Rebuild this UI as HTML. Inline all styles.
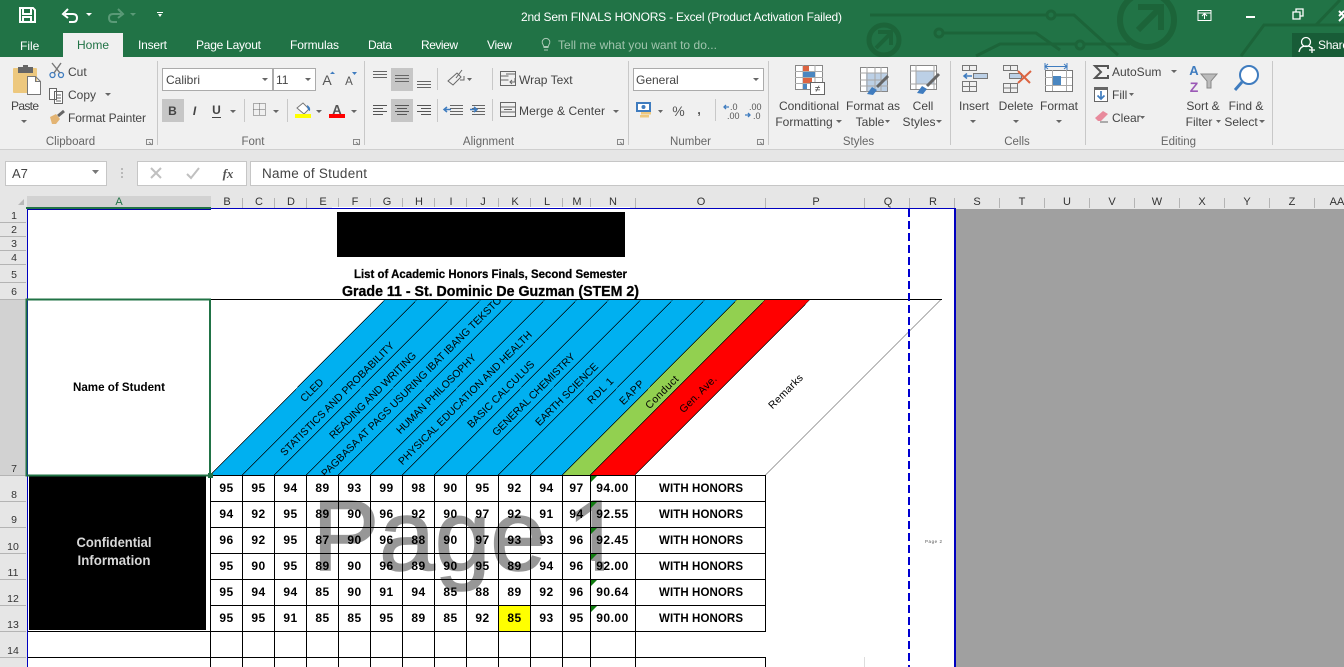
<!DOCTYPE html>
<html><head><meta charset="utf-8"><style>
html,body{margin:0;padding:0;width:1344px;height:667px;overflow:hidden;background:#fff}
svg{display:block}
text{font-family:"Liberation Sans",sans-serif}
.r{font-size:12px;fill:#444}
.g{font-size:11.5px;fill:#666;text-anchor:middle}
.t{font-size:12px;fill:#fff}
.h{font-size:11px;fill:#333;text-anchor:middle}
.rh{font-size:10.5px;fill:#333;text-anchor:middle}
.n{font-size:12px;font-weight:bold;fill:#000;text-anchor:middle;letter-spacing:.5px}
.d{font-size:10.5px;fill:#000}
.c{text-anchor:middle}
</style></head><body>
<svg width="1344" height="667" viewBox="0 0 1344 667" xmlns="http://www.w3.org/2000/svg">
<defs><clipPath id="tb"><rect x="0" y="0" width="1344" height="57"/></clipPath><clipPath id="hd"><rect x="211" y="300" width="760" height="175"/></clipPath>
<clipPath id="one"><path d="M570 490H620V561H604V575H595V561H570z"/></clipPath></defs>
<!-- title bar -->
<rect width="1344" height="57" fill="#217346"/>
<g clip-path="url(#tb)" fill="none" stroke="#1c6439" stroke-width="3">
<circle cx="1147" cy="20" r="27" stroke-width="6"/><path d="M1138 30L1160 8M1138 7h23v23" stroke-width="6"/>
<circle cx="884" cy="40" r="15" stroke-width="5"/><path d="M876 48L890 34M878 32h13v13" stroke-width="4"/>
<path d="M870 15H1047M1055 15H1074L1118 55M944 33H1036L1060 50M976 56L1000 44H1075M1085 44H1130"/>
<circle cx="1051" cy="15" r="4"/><circle cx="939" cy="33" r="4"/><circle cx="1080" cy="45" r="4"/>
<path d="M1241 56L1264 25H1344M1316 25L1340 0"/>
</g>
<!-- QAT -->
<path d="M20 8h13l2 2v12H20z M23 8v6h8V8 M23 22v-5h8v5" fill="none" stroke="#fff" stroke-width="2"/>
<path d="M65 14h8q4 0 4 4t-4 4h-4M68 9l-5 5 5 4" fill="none" stroke="#fff" stroke-width="2"/>
<path d="M86 13h6l-3 3zM157 12h6v1h-6zM158 14h4l-2 3z" fill="#fff"/>
<path d="M121 14h-8q-4 0-4 4t4 4h4M118 9l5 5-5 4" fill="none" stroke="#5a9a77" stroke-width="2"/>
<path d="M130 13h6l-3 3z" fill="#5a9a77"/>
<text x="521" y="21" class="t" textLength="321">2nd Sem FINALS HONORS - Excel (Product Activation Failed)</text>
<!-- window controls -->
<path d="M1198 10.500h13v10h-13zM1198 13h13M1204.500 19v-5M1202 16l2.500-2.500 2.500 2.500" fill="none" stroke="#fff"/>
<rect x="1246" y="16" width="9" height="2" fill="#fff"/>
<path d="M1293 12h7v7h-7zM1296 12v-3h7v7h-3" fill="none" stroke="#fff" stroke-width="1.300"/>
<path d="M1339 11l5 5M1344 11l-5 5M1339 21l5-5" stroke="#fff" stroke-width="2"/>
<!-- tabs -->
<rect x="1292" y="33" width="52" height="24" fill="#185c37"/>
<circle cx="1306" cy="42" r="4.500" fill="none" stroke="#fff" stroke-width="1.300"/><path d="M1299 52q1-6 7-6t6 3M1309 50h6M1312 47v6" fill="none" stroke="#fff" stroke-width="1.300"/>
<text x="1318" y="49" class="t" textLength="31">Share</text>
<rect x="63" y="33" width="60" height="24" fill="#f0f0f0"/>
<text x="20" y="50" class="t">File</text>
<text x="93" y="49" font-size="12" fill="#217346" text-anchor="middle">Home</text>
<text x="138" y="49" class="t" textLength="29">Insert</text><text x="196" y="49" class="t" textLength="65">Page Layout</text><text x="290" y="49" class="t" textLength="49">Formulas</text><text x="368" y="49" class="t" textLength="24">Data</text><text x="421" y="49" class="t" textLength="37">Review</text><text x="487" y="49" class="t" textLength="25">View</text>
<path d="M544 50h4M543.500 47.500h5M543 44.500a3.800 3.800 0 1 1 6 0l-.8 2h-4.400z" fill="none" stroke="#a9c9b5"/>
<text x="558" y="49" font-size="12" fill="#a0c4ad" textLength="159">Tell me what you want to do...</text>
<!-- ribbon -->
<rect y="57" width="1344" height="93" fill="#f0f0f0"/>
<rect y="149" width="1344" height="1" fill="#cfcfcf"/>
<path d="M157.500 61v84M364.500 61v84M628.500 61v84M768.500 61v84M950.500 61v84M1085.500 61v84M1272.500 61v84" stroke="#c8c8c8"/>
<text x="70.500" y="145" class="g">Clipboard</text><text x="253" y="145" class="g">Font</text><text x="488.500" y="145" class="g">Alignment</text><text x="690.500" y="145" class="g">Number</text><text x="858.500" y="145" class="g">Styles</text><text x="1017" y="145" class="g">Cells</text><text x="1178.500" y="145" class="g">Editing</text>
<path d="M146.500 139.500h6v5h-6zM149 142l3 3M353.500 139.500h6v5h-6zM356 142l3 3M617.500 139.500h6v5h-6zM620 142l3 3M757.500 139.500h6v5h-6zM760 142l3 3" fill="none" stroke="#888"/>
<!-- clipboard -->
<rect x="13" y="68" width="24" height="25" rx="1" fill="#edc87e"/><rect x="18" y="67" width="15" height="6" fill="#666"/><rect x="23" y="65" width="5" height="4" fill="#666"/>
<path d="M27.500 76.500h8l5 5v13h-13z M35.500 76.500v5h5" fill="#fff" stroke="#777"/>
<text x="11" y="110" class="r" textLength="28">Paste</text><path d="M21 120h6l-3 3z" fill="#666"/>
<circle cx="52.500" cy="75" r="2.500" fill="none" stroke="#3f7cbf" stroke-width="1.300"/><circle cx="61" cy="75" r="2.500" fill="none" stroke="#3f7cbf" stroke-width="1.300"/><path d="M54 73l7-10M60 73l-8-10" stroke="#777" stroke-width="1.400"/>
<text x="68" y="76" class="r">Cut</text>
<path d="M49.500 88.500h7v11h-7zM54.500 91.500h8v12h-8zM56 95h5M56 98h5M56 101h5" fill="#fff" stroke="#666"/>
<text x="68" y="99" class="r" textLength="28">Copy</text><path d="M105 93h6l-3 3z" fill="#666"/>
<path d="M50 117l6-3 4 5-4 5h-4z" fill="#e3b473"/><path d="M58 116l6-5" stroke="#666" stroke-width="3"/>
<text x="68" y="122" class="r" textLength="78">Format Painter</text>
<!-- font -->
<path d="M162.500 68.500h110v22h-110zM273.500 68.500h42v22h-42z" fill="#fff" stroke="#ababab"/>
<text x="166" y="84" class="r">Calibri</text><text x="276" y="84" class="r">11</text>
<path d="M262 78h6l-3 3zM305 78h6l-3 3z" fill="#666"/>
<text x="327" y="85" font-size="14" fill="#555" text-anchor="middle">A</text><path d="M330 74h5l-2.500-2.500z" fill="#3f7cbf"/>
<text x="349" y="85" font-size="11.500" fill="#555" text-anchor="middle">A</text><path d="M352 72h5l-2.500 3z" fill="#3f7cbf"/>
<rect x="162" y="99" width="22" height="23" fill="#c6c6c6"/>
<text x="172.500" y="115" font-size="12" font-weight="bold" fill="#444" text-anchor="middle">B</text>
<text x="194.500" y="115" font-size="12" font-style="italic" font-weight="bold" fill="#444" text-anchor="middle">I</text>
<text x="216.500" y="114" font-size="12" font-weight="bold" fill="#444" text-anchor="middle">U</text><path d="M212 117.500h9" stroke="#444"/>
<path d="M230 110h6l-3 3zM273 110h6l-3 3zM316 110h6l-3 3zM351 110h6l-3 3z" fill="#666"/>
<path d="M244.500 99v23M287.500 99v23" stroke="#c8c8c8"/>
<path d="M253.500 103.500h12v12h-12zM253.500 109.500h12M259.500 103.500v12" fill="none" stroke="#666" stroke-dasharray="1 1"/>
<path d="M297 108l6-5 6 6-5 5z" fill="#fff" stroke="#777"/><path d="M307 105q4 2 3 6-3-1-3-6z" fill="#3f7cbf"/>
<rect x="295" y="114" width="16" height="4" fill="#ffff00"/>
<text x="337" y="114" font-size="13" font-weight="bold" fill="#555" text-anchor="middle">A</text>
<rect x="329" y="114" width="16" height="4" fill="#f00"/>
<!-- alignment -->
<rect x="391" y="68" width="22" height="23" fill="#c6c6c6"/><rect x="391" y="99" width="22" height="23" fill="#c6c6c6"/>
<path d="M373 71.500h14M373 74.500h14M373 77.500h14M395 75.500h14M395 78.500h14M395 81.500h14M417 81.500h14M417 84.500h14M417 87.500h14" stroke="#666"/>
<path d="M373 105.500h14M373 108.500h10M373 111.500h14M373 114.500h10M395 105.500h14M397 108.500h10M395 111.500h14M397 114.500h10M417 105.500h14M421 108.500h10M417 111.500h14M421 114.500h10" stroke="#555"/>
<path d="M437.500 68v22M437.500 99v23M492.500 68v22M492.500 99v22" stroke="#c8c8c8"/>
<path d="M448 81l9-8 4 4-8 8zM462 70l-6 8" fill="none" stroke="#666"/><path d="M460 80h4v-4" fill="none" stroke="#666"/><path d="M467 78h5l-2.500 3z" fill="#666"/>
<path d="M450 105.500h13M450 108.500h13M450 111.500h13M450 114.500h13M472 105.500h13M472 108.500h13M472 111.500h13M472 114.500h13" stroke="#666"/>
<path d="M445 109.500h6M447 107l-3 2.500 3 2.500M470 109.500h6M474 107l3 2.500-3 2.500" fill="none" stroke="#3f7cbf" stroke-width="1.500"/>
<path d="M500.500 71.500h15v14h-15zM500.500 76h8M500.500 80h8M506 74h9M515 78v4h-5M512 80l-2 2 2 2" fill="none" stroke="#666"/>
<text x="519" y="84" class="r">Wrap Text</text>
<path d="M500.500 102.500h15v14h-15zM500.500 107h15M500.500 112h15M504 109.500h8" fill="none" stroke="#666"/>
<text x="519" y="115" class="r" textLength="86">Merge &amp; Center</text>
<path d="M613 110h6l-3 3z" fill="#666"/>
<!-- number -->
<rect x="633.500" y="68.500" width="130" height="22" fill="#fff" stroke="#ababab"/><text x="636" y="84" class="r">General</text>
<path d="M753 78h6l-3 3zM658 110h5l-2.500 3z" fill="#666"/>
<rect x="637" y="103" width="13" height="8" fill="#fff" stroke="#3f7cbf" stroke-width="2"/><circle cx="643.500" cy="107" r="2" fill="#3f7cbf"/><rect x="641" y="112" width="10" height="2.500" fill="#edc87e"/><rect x="640" y="115" width="9" height="2.500" fill="#edc87e"/>
<text x="678.500" y="116" font-size="14" fill="#555" text-anchor="middle">%</text><text x="699" y="114" font-size="13" font-weight="bold" fill="#555" text-anchor="middle">,</text>
<path d="M715.500 99v22" stroke="#c8c8c8"/>
<text x="730" y="110" font-size="9" fill="#555">.0</text><text x="727" y="119" font-size="9" fill="#555">.00</text>
<text x="749" y="110" font-size="9" fill="#555">.00</text><text x="753" y="119" font-size="9" fill="#555">.0</text>
<path d="M724 107h5M726 105l-2 2 2 2M745 115h5M748 113l2 2-2 2" fill="none" stroke="#3f7cbf" stroke-width="1.300"/>
<!-- styles -->
<rect x="795.500" y="65.500" width="27" height="24" fill="#fff" stroke="#888"/><path d="M795 71.500h28M795 77.500h28M795 83.500h28M803 65v24M815 65v24" stroke="#aaa"/>
<rect x="803" y="66" width="6" height="5" fill="#dc6441"/><rect x="803" y="72" width="12" height="5" fill="#4a86c0"/><rect x="803" y="78" width="9" height="5" fill="#dc6441"/><rect x="803" y="84" width="4" height="5" fill="#4a86c0"/>
<rect x="810.500" y="82.500" width="14" height="12" fill="#fff" stroke="#666"/><text x="817.500" y="92" font-size="10" fill="#444" text-anchor="middle">≠</text>
<text x="809" y="110" class="r c">Conditional</text><text x="804" y="126" class="r c">Formatting</text>
<rect x="860.500" y="67.500" width="27" height="24" fill="#fff" stroke="#888"/><rect x="866" y="73" width="21" height="18" fill="#bcd0e6"/><path d="M860 73h28M860 80h28M860 86h28M867 67v25M875 67v25M881 67v25" stroke="#a6a6a6"/>
<path d="M867 94l5-7 5 3-4 5z" fill="#3f7cbf"/><path d="M877 87l11-11" stroke="#666" stroke-width="3"/>
<text x="873" y="110" class="r c">Format as</text><text x="870" y="126" class="r c">Table</text>
<rect x="910.500" y="65.500" width="26" height="24" fill="#fff" stroke="#888"/><rect x="916" y="71" width="18" height="13" fill="#bcd0e6"/><path d="M910 71h26M910 84h26M916 65v24M934 65v24" stroke="#a6a6a6"/>
<path d="M917 93l5-7 5 3-4 5z" fill="#3f7cbf"/><path d="M927 86l12-12" stroke="#666" stroke-width="3"/>
<text x="923" y="110" class="r c">Cell</text><text x="919" y="126" class="r c" textLength="33">Styles</text>
<path d="M836 120h6l-3 3zM885 120h5l-2.500 3zM936 120h6l-3 3zM970 120h6l-3 3zM1013 120h6l-3 3zM1056 120h6l-3 3zM1171 70h6l-3 3zM1129 93h5l-2.500 3zM1140 116h5l-2.500 3zM1216 120h5l-2.500 3zM1259 120h6l-3 3z" fill="#666"/>
<!-- cells -->
<path d="M962.500 65.500h14v5h-14zM969.500 65.500v5M962.500 81.500h14v10h-14zM962.500 86.500h14M969.500 81.500v10" fill="none" stroke="#777"/>
<rect x="973.500" y="73.500" width="14" height="5" fill="#bcd0e6" stroke="#777"/><path d="M964 76h8M967 73.500l-3 2.500 3 2.500" fill="none" stroke="#3f7cbf" stroke-width="1.500"/>
<text x="974" y="110" class="r c">Insert</text>
<path d="M1003.500 65.500h14v5h-14zM1010.500 65.500v5M1003.500 83.500h14v9h-14zM1003.500 88h14M1010.500 83.500v9" fill="none" stroke="#777"/><rect x="1009.500" y="73.500" width="12" height="5" fill="#bcd0e6" stroke="#777"/>
<path d="M1018 71l12 12M1031 71l-13 12" stroke="#dc6441" stroke-width="2"/>
<text x="1016" y="110" class="r c">Delete</text>
<path d="M1045 66.500h22M1048 64l-3 2.500 3 2.500M1064 64l3 2.500-3 2.500" fill="none" stroke="#3f7cbf"/><path d="M1045 63v7M1067 63v7" stroke="#3f7cbf"/>
<rect x="1045.500" y="70.500" width="27" height="21" fill="#fff" stroke="#777"/><path d="M1052.500 70v21M1066.500 70v21M1045 77.500h27M1045 85.500h27" stroke="#aaa"/><rect x="1053" y="76" width="8" height="9" fill="#4a86c0"/>
<text x="1059" y="110" class="r c">Format</text>
<!-- editing -->
<path d="M1108 69v-3h-13l6 6-6 6h13v-3" fill="none" stroke="#555" stroke-width="2"/>
<text x="1112" y="76" class="r">AutoSum</text>
<rect x="1094.500" y="88.500" width="13" height="13" fill="#fff" stroke="#666"/><rect x="1094" y="87" width="14" height="3" fill="#666"/><path d="M1101 91v8M1097.500 95.500l3.500 3.500 3.500-3.500" fill="none" stroke="#3f7cbf" stroke-width="1.700"/>
<text x="1112" y="99" class="r">Fill</text>
<path d="M1095 118l8-7 5 3-7 7h-3z" fill="#e88a9c"/><path d="M1100 122h8" stroke="#666"/>
<text x="1112" y="122" class="r">Clear</text>
<text x="1194" y="75" font-size="13" font-weight="bold" fill="#3f7cbf" text-anchor="middle">A</text><text x="1194" y="92" font-size="14" font-weight="bold" fill="#9b59b6" text-anchor="middle">Z</text>
<path d="M1201 74h16l-6 7v7h-4v-7z" fill="#bbb" stroke="#888"/>
<text x="1203" y="110" class="r c">Sort &amp;</text><text x="1199" y="126" class="r c">Filter</text>
<circle cx="1249" cy="75" r="9" fill="#fff" stroke="#3f7cbf" stroke-width="2"/><path d="M1242 82l-7 8" stroke="#3f7cbf" stroke-width="3"/>
<text x="1246" y="110" class="r c">Find &amp;</text><text x="1241" y="126" class="r c">Select</text>
<!-- formula bar -->
<rect y="150" width="1344" height="46" fill="#e6e6e6"/>
<path d="M5.500 161.500h101v24h-101zM137.500 161.500h109v24h-109zM250.500 161.500h1100v24h-1100z" fill="#fff" stroke="#c6c6c6"/>
<text x="12" y="178" font-size="13" fill="#444">A7</text><path d="M92 170h7l-3.500 4z" fill="#777"/>
<path d="M122 168v2M122 172v2M122 176v2" stroke="#aaa" stroke-width="1.500"/>
<path d="M151 168l10 10M161 168l-10 10M187 174l4 4 8-10" fill="none" stroke="#c0c0c0" stroke-width="2"/>
<text x="228" y="178" font-size="13" font-style="italic" font-weight="bold" fill="#555" text-anchor="middle" style="font-family:'Liberation Serif',serif">fx</text>
<text x="262" y="178" font-size="13.500" fill="#444" textLength="105">Name of Student</text>
<!-- headers -->
<rect y="196" width="1344" height="13" fill="#e6e6e6"/><rect y="196" width="27" height="471" fill="#e6e6e6"/>
<rect x="27" y="196" width="184" height="12" fill="#d2d2d2"/><rect x="26" y="207" width="185" height="2" fill="#217346"/>
<rect y="299" width="27" height="176" fill="#d2d2d2"/>
<path d="M24 199v6h-6z" fill="#b8b8b8"/>
<path d="M242.500 198v10M274.500 198v10M306.500 198v10M338.500 198v10M370.500 198v10M402.500 198v10M434.500 198v10M466.500 198v10M498.500 198v10M530.500 198v10M562.500 198v10M590.500 198v10M635.500 198v10M765.500 198v10M864.500 198v10M909.500 198v10M954.500 198v10M999.500 198v10M1044.500 198v10M1089.500 198v10M1134.500 198v10M1179.500 198v10M1224.500 198v10M1269.500 198v10M1314.500 198v10" stroke="#b4b4b4"/>
<path d="M0 222.500h26M0 236.500h26M0 250.500h26M0 264.500h26M0 282.500h26M0 299.500h26M0 475.500h26M0 501.500h26M0 527.500h26M0 553.500h26M0 579.500h26M0 605.500h26M0 631.500h26M0 657.500h26" stroke="#b4b4b4"/>
<text x="119" y="205" class="h" style="fill:#217346">A</text>
<text x="227" y="205" class="h">B</text><text x="259" y="205" class="h">C</text><text x="291" y="205" class="h">D</text><text x="323" y="205" class="h">E</text><text x="355" y="205" class="h">F</text><text x="387" y="205" class="h">G</text><text x="419" y="205" class="h">H</text><text x="451" y="205" class="h">I</text><text x="483" y="205" class="h">J</text><text x="515" y="205" class="h">K</text><text x="547" y="205" class="h">L</text><text x="577" y="205" class="h">M</text><text x="613" y="205" class="h">N</text><text x="701" y="205" class="h">O</text><text x="816" y="205" class="h">P</text><text x="888" y="205" class="h">Q</text><text x="933" y="205" class="h">R</text><text x="977" y="205" class="h">S</text><text x="1022" y="205" class="h">T</text><text x="1067" y="205" class="h">U</text><text x="1112" y="205" class="h">V</text><text x="1157" y="205" class="h">W</text><text x="1202" y="205" class="h">X</text><text x="1247" y="205" class="h">Y</text><text x="1292" y="205" class="h">Z</text><text x="1337" y="205" class="h">AA</text>
<text x="14" y="219" class="rh">1</text><text x="14" y="233" class="rh">2</text><text x="14" y="247" class="rh">3</text><text x="14" y="261" class="rh">4</text><text x="14" y="278" class="rh">5</text><text x="14" y="295" class="rh">6</text><text x="14" y="472" class="rh">7</text><text x="14" y="498" class="rh">8</text><text x="14" y="523" class="rh">9</text><text x="13" y="550" class="rh">10</text><text x="13" y="576" class="rh">11</text><text x="13" y="602" class="rh">12</text><text x="13" y="628" class="rh">13</text><text x="13" y="654" class="rh">14</text>
<!-- sheet -->
<rect x="27" y="209" width="928" height="458" fill="#fff"/>
<rect x="956" y="209" width="388" height="458" fill="#a0a0a0"/>
<rect x="332" y="207" width="298" height="2" fill="#fff"/>
<rect x="337" y="212" width="288" height="45" fill="#000"/>
<text x="354" y="278" font-size="12" font-weight="bold" fill="#000" stroke="#000" stroke-width=".25" textLength="273" lengthAdjust="spacingAndGlyphs">List of Academic Honors Finals, Second Semester</text>
<text x="342" y="296" font-size="14.500" font-weight="bold" fill="#000" stroke="#000" stroke-width=".3" textLength="297" lengthAdjust="spacingAndGlyphs">Grade 11 - St. Dominic De Guzman (STEM 2)</text>
<text x="73" y="391" font-size="11.500" font-weight="bold" fill="#000" textLength="92" lengthAdjust="spacingAndGlyphs">Name of Student</text>
<!-- diagonal header -->
<path d="M210.500 475L385.500 299H737.500L562.500 475z" fill="#00b0f0" shape-rendering="crispEdges"/>
<path d="M562.500 475L737.500 299H766L590.500 475z" fill="#92d050" shape-rendering="crispEdges"/>
<path d="M590.500 475L766 299H810.500L635 475z" fill="#f00" shape-rendering="crispEdges"/>
<path d="M211 299.500H942" stroke="#000" fill="none"/>
<path d="M210.500 475L385.500 299M242.500 475L417.500 299M274.500 475L449.500 299M306.500 475L481.500 299M338.500 475L513.500 299M370.500 475L545.500 299M402.500 475L577.500 299M434.500 475L609.500 299M466.500 475L641.500 299M498.500 475L673.500 299M530.500 475L705.500 299M562.500 475L737.500 299M590.500 475L766 299M635 475L810.500 299M765.500 475L941.500 299" stroke="#000" stroke-width=".7" fill="none" shape-rendering="crispEdges"/>
<g clip-path="url(#hd)">
<text transform="translate(304.500 402.500) rotate(-45)" class="d" textLength="28">CLED</text>
<text transform="translate(284.500 456.500) rotate(-45)" class="d" textLength="156">STATISTICS AND PROBABILITY</text>
<text transform="translate(333.500 439.500) rotate(-45)" class="d" textLength="118">READING AND WRITING</text>
<text transform="translate(325.500 477.500) rotate(-45)" class="d" textLength="250">PAGBASA AT PAGS USURING IBAT IBANG TEKSTO</text>
<text transform="translate(400.500 434.500) rotate(-45)" class="d" textLength="108">HUMAN PHILOSOPHY</text>
<text transform="translate(402.500 465.500) rotate(-45)" class="d" textLength="184">PHYSICAL EDUCATION AND HEALTH</text>
<text transform="translate(471.500 428.500) rotate(-45)" class="d" textLength="90">BASIC CALCULUS</text>
<text transform="translate(496.500 436.500) rotate(-45)" class="d" textLength="112">GENERAL CHEMISTRY</text>
<text transform="translate(539.500 426.500) rotate(-45)" class="d" textLength="84">EARTH SCIENCE</text>
<text transform="translate(591.500 404.500) rotate(-45)" class="d" textLength="32">RDL 1</text>
<text transform="translate(623.500 405.500) rotate(-45)" class="d" textLength="30">EAPP</text>
<text transform="translate(649.500 409.500) rotate(-45)" class="d" textLength="42">Conduct</text>
<text transform="translate(683.500 413.500) rotate(-45)" class="d" textLength="48">Gen. Ave.</text>
<text transform="translate(772.500 409.500) rotate(-45)" class="d" textLength="44">Remarks</text>
</g>
<!-- confidential -->
<rect x="29" y="475" width="177" height="155" fill="#000"/>
<text x="114" y="547" font-size="13.500" font-weight="bold" fill="#d8d8d8" text-anchor="middle" textLength="75" lengthAdjust="spacingAndGlyphs">Confidential</text>
<text x="114" y="565" font-size="13.500" font-weight="bold" fill="#d8d8d8" text-anchor="middle" textLength="73" lengthAdjust="spacingAndGlyphs">Information</text>
<!-- watermark -->
<text x="312.500" y="570" font-size="100" fill="#979797" stroke="#979797" stroke-width="1.500">Page</text>
<text x="567" y="570" font-size="100" fill="#979797" stroke="#979797" stroke-width="1.500" clip-path="url(#one)">1</text>
<rect x="499" y="606" width="31" height="25" fill="#ff0"/>
<!-- grid -->
<path d="M210 475.500H766M210 501.500H766M210 527.500H766M210 553.500H766M210 579.500H766M210 605.500H766M27 631.500H766M27 657.500H766M210.500 475V667M242.500 475V667M274.500 475V667M306.500 475V667M338.500 475V667M370.500 475V667M402.500 475V667M434.500 475V667M466.500 475V667M498.500 475V667M530.500 475V667M562.500 475V667M590.500 475V667M635.500 475V667M765.500 475V631M765.500 657V667" stroke="#000" fill="none"/>
<path d="M864.500 657V667" stroke="#ddd"/>
<path d="M591 476h6l-6 6zM591 502h6l-6 6zM591 528h6l-6 6zM591 554h6l-6 6zM591 580h6l-6 6zM591 606h6l-6 6z" fill="#107c10"/>
<!-- numbers -->
<g transform="translate(-.5 0)">
<text class="n" x="227" y="492">95</text><text class="n" x="259" y="492">95</text><text class="n" x="291" y="492">94</text><text class="n" x="323" y="492">89</text><text class="n" x="355" y="492">93</text><text class="n" x="387" y="492">99</text><text class="n" x="419" y="492">98</text><text class="n" x="451" y="492">90</text><text class="n" x="483" y="492">95</text><text class="n" x="515" y="492">92</text><text class="n" x="547" y="492">94</text><text class="n" x="577" y="492">97</text><text class="n" x="613" y="492">94.00</text>
<text class="n" x="227" y="518">94</text><text class="n" x="259" y="518">92</text><text class="n" x="291" y="518">95</text><text class="n" x="323" y="518">89</text><text class="n" x="355" y="518">90</text><text class="n" x="387" y="518">96</text><text class="n" x="419" y="518">92</text><text class="n" x="451" y="518">90</text><text class="n" x="483" y="518">97</text><text class="n" x="515" y="518">92</text><text class="n" x="547" y="518">91</text><text class="n" x="577" y="518">94</text><text class="n" x="613" y="518">92.55</text>
<text class="n" x="227" y="544">96</text><text class="n" x="259" y="544">92</text><text class="n" x="291" y="544">95</text><text class="n" x="323" y="544">87</text><text class="n" x="355" y="544">90</text><text class="n" x="387" y="544">96</text><text class="n" x="419" y="544">88</text><text class="n" x="451" y="544">90</text><text class="n" x="483" y="544">97</text><text class="n" x="515" y="544">93</text><text class="n" x="547" y="544">93</text><text class="n" x="577" y="544">96</text><text class="n" x="613" y="544">92.45</text>
<text class="n" x="227" y="570">95</text><text class="n" x="259" y="570">90</text><text class="n" x="291" y="570">95</text><text class="n" x="323" y="570">89</text><text class="n" x="355" y="570">90</text><text class="n" x="387" y="570">96</text><text class="n" x="419" y="570">89</text><text class="n" x="451" y="570">90</text><text class="n" x="483" y="570">95</text><text class="n" x="515" y="570">89</text><text class="n" x="547" y="570">94</text><text class="n" x="577" y="570">96</text><text class="n" x="613" y="570">92.00</text>
<text class="n" x="227" y="596">95</text><text class="n" x="259" y="596">94</text><text class="n" x="291" y="596">94</text><text class="n" x="323" y="596">85</text><text class="n" x="355" y="596">90</text><text class="n" x="387" y="596">91</text><text class="n" x="419" y="596">94</text><text class="n" x="451" y="596">85</text><text class="n" x="483" y="596">88</text><text class="n" x="515" y="596">89</text><text class="n" x="547" y="596">92</text><text class="n" x="577" y="596">96</text><text class="n" x="613" y="596">90.64</text>
<text class="n" x="227" y="622">95</text><text class="n" x="259" y="622">95</text><text class="n" x="291" y="622">91</text><text class="n" x="323" y="622">85</text><text class="n" x="355" y="622">85</text><text class="n" x="387" y="622">95</text><text class="n" x="419" y="622">89</text><text class="n" x="451" y="622">85</text><text class="n" x="483" y="622">92</text><text class="n" x="515" y="622">85</text><text class="n" x="547" y="622">93</text><text class="n" x="577" y="622">95</text><text class="n" x="613" y="622">90.00</text>
</g>
<g font-size="11.500" font-weight="bold" fill="#000">
<text x="659" y="492" textLength="84">WITH HONORS</text><text x="659" y="518" textLength="84">WITH HONORS</text><text x="659" y="544" textLength="84">WITH HONORS</text><text x="659" y="570" textLength="84">WITH HONORS</text><text x="659" y="596" textLength="84">WITH HONORS</text><text x="659" y="622" textLength="84">WITH HONORS</text>
</g>
<text x="925" y="543" font-size="4.500" fill="#555" textLength="17">Page 2</text>
<!-- page break lines -->
<rect x="211" y="208" width="744" height="1" fill="#0000c0"/>
<rect x="27" y="209" width="184" height="1" fill="#0000a0"/>
<rect x="27" y="209" width="1" height="458" fill="#0000c0"/>
<rect x="954" y="208" width="2" height="459" fill="#0000c0"/>
<path d="M909 209V667" stroke="#0000d0" stroke-width="2" stroke-dasharray="8 4" fill="none"/>
<!-- selection -->
<path d="M26.500 299.500H210V475.500H26.500z" fill="none" stroke="#217346" stroke-width="2"/>
<rect x="208" y="473" width="5" height="5" fill="#217346"/>
</svg>
</body></html>
